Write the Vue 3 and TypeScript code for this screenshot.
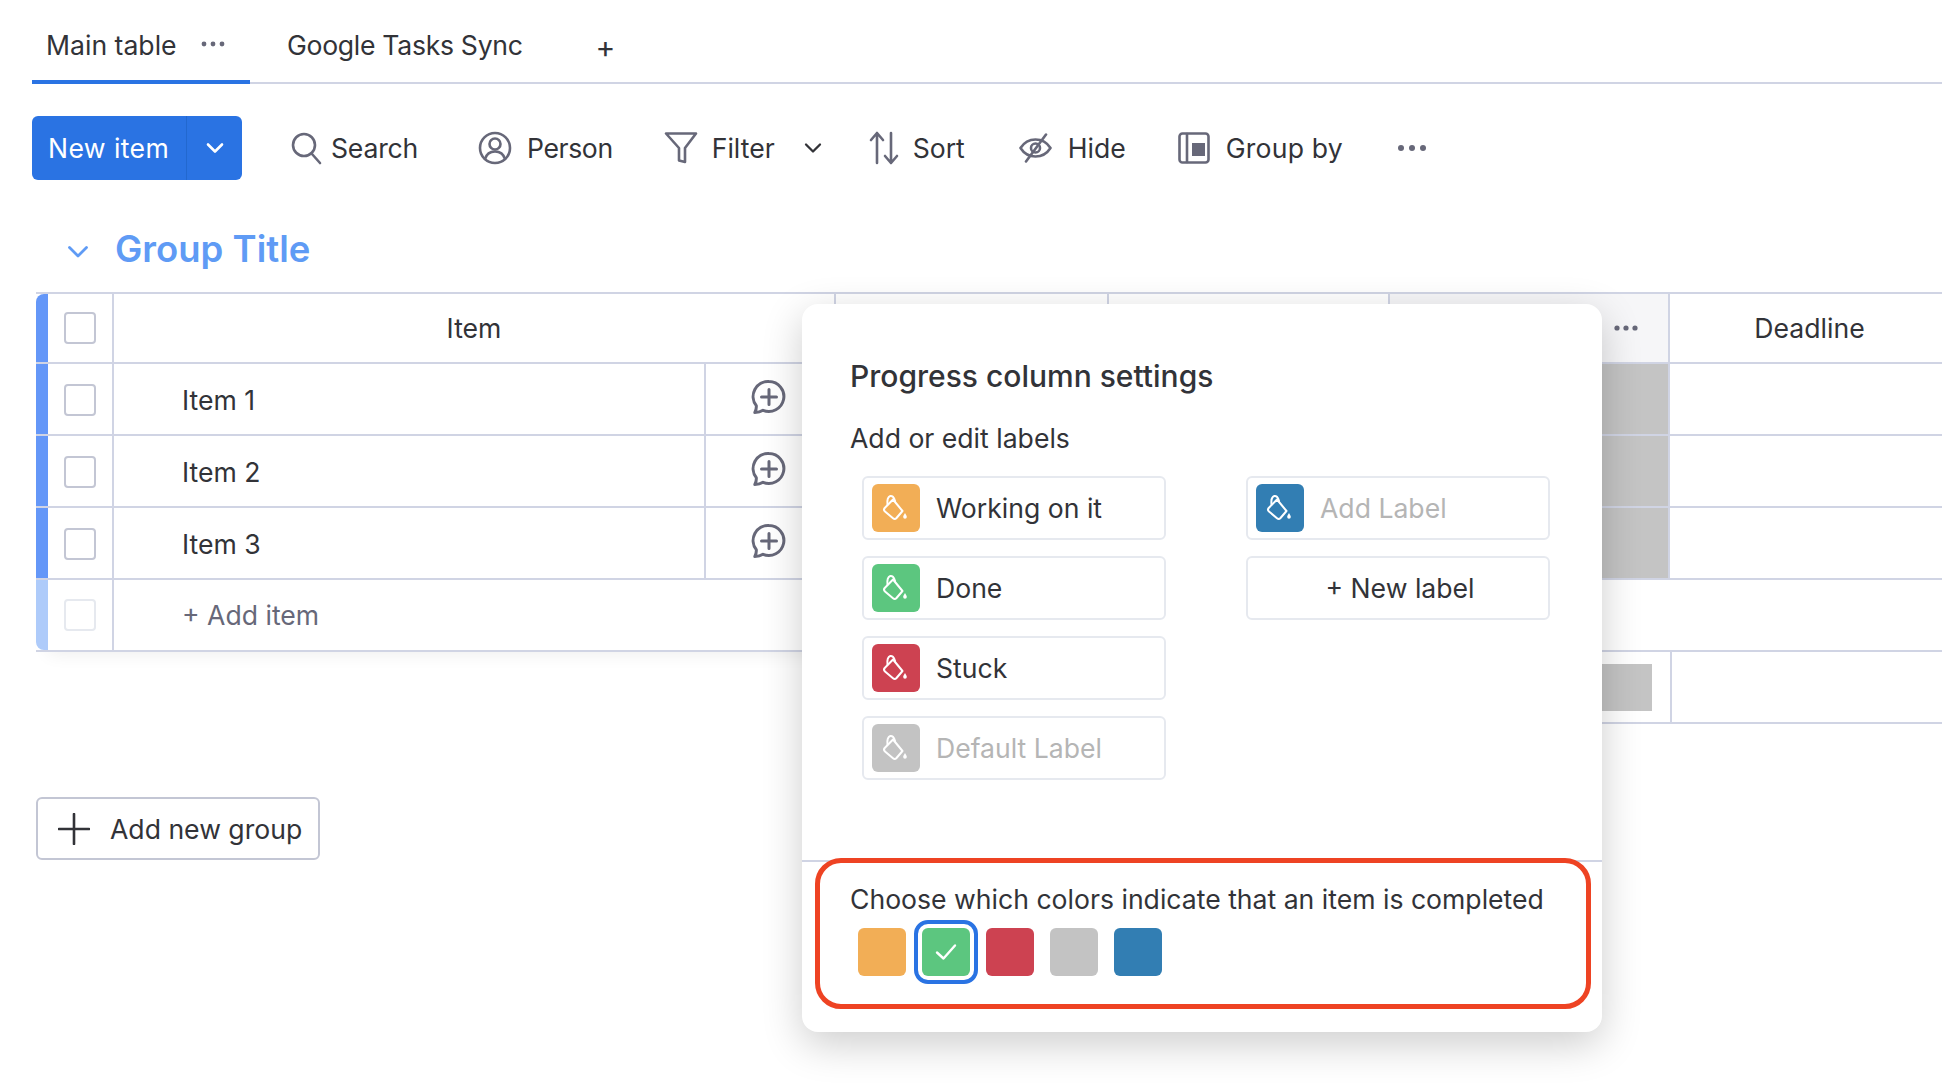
<script setup lang="ts">
const rows = ['Item 1', 'Item 2', 'Item 3']
const leftLabels = [
  { text: 'Working on it', color: '#f2ae56' },
  { text: 'Done', color: '#5cc67f' },
  { text: 'Stuck', color: '#cd4251' },
  { text: 'Default Label', color: '#c3c3c3', muted: true },
]
const swatches = [
  { color: '#f2ae56' },
  { color: '#5cc67f', picked: true },
  { color: '#cd4251' },
  { color: '#c3c3c3' },
  { color: '#327eb3' },
]
</script>

<template>
  <div class="page">
    <nav class="tabs">
      <div class="tab tab-active">
        <span>Main table</span>
        <svg class="tab-dots" width="24" height="6" viewBox="0 0 24 6"><circle cx="3" cy="3" r="2.4" /><circle cx="12" cy="3" r="2.4" /><circle cx="21" cy="3" r="2.4" /></svg>
      </div>
      <div class="tab tab-sync">Google Tasks Sync</div>
      <div class="tab-add">+</div>
    </nav>

    <div class="toolbar">
      <div class="new-item">
        <span class="new-item-text">New item</span>
        <span class="new-item-arrow">
          <svg width="20" height="12" viewBox="0 0 20 12" fill="none" stroke="#fff" stroke-width="2.6" stroke-linecap="round" stroke-linejoin="round"><path d="M3 2.5l7 7 7-7" /></svg>
        </span>
      </div>
      <div class="tool tool-search">
        <svg width="32" height="34" viewBox="0 0 32 34" class="ico"><circle cx="14" cy="14" r="11" /><path d="M22 23l8 9" /></svg>
        <span>Search</span>
      </div>
      <div class="tool tool-person">
        <svg width="34" height="34" viewBox="0 0 34 34" class="ico"><circle cx="17" cy="17" r="15" /><circle cx="17" cy="13" r="5.5" /><path d="M7 28c1.500-5 5-7.500 10-7.500s8.500 2.500 10 7.500" /></svg>
        <span>Person</span>
      </div>
      <div class="tool tool-filter">
        <svg width="34" height="34" viewBox="0 0 34 34" class="ico"><path d="M2 2.500h30L21 17v14l-6-1.500V17z" /></svg>
        <span>Filter</span>
      </div>
      <div class="tool tool-chev">
        <svg width="18" height="12" viewBox="0 0 18 12" fill="none" stroke="#323338" stroke-width="2.300" stroke-linecap="round" stroke-linejoin="round"><path d="M2 2.500l7 7 7-7" /></svg>
      </div>
      <div class="tool tool-sort">
        <svg width="30" height="34" viewBox="0 0 30 34" class="ico"><path d="M8 32V2M2 9l6-7 6 7" /><path d="M22 2v30M16 25l6 7 6-7" /></svg>
        <span>Sort</span>
      </div>
      <div class="tool tool-hide">
        <svg width="33" height="30" viewBox="0 0 33 30" class="ico"><path d="M1.500 15C5 9.500 10.500 6.500 16.500 6.500S28 9.500 31.500 15C28 20.500 22.500 23.500 16.500 23.500S5 20.500 1.500 15z" /><circle cx="16.500" cy="15" r="4.500" /><path d="M27 1.500L7 28.500" /></svg>
        <span>Hide</span>
      </div>
      <div class="tool tool-group">
        <svg width="32" height="32" viewBox="0 0 32 32" class="ico"><rect x="1.500" y="1.500" width="29" height="29" rx="3" /><path d="M9 2v28" /><rect x="14" y="11" width="13" height="13" class="ico-fill" /></svg>
        <span>Group by</span>
      </div>
      <svg class="tool-more" width="30" height="8" viewBox="0 0 30 8"><circle cx="4" cy="4" r="3" /><circle cx="15" cy="4" r="3" /><circle cx="26" cy="4" r="3" /></svg>
    </div>

    <div class="group-head">
      <svg class="group-chev" width="22" height="14" viewBox="0 0 22 14" fill="none" stroke="#5f9bf5" stroke-width="2.800" stroke-linecap="round" stroke-linejoin="round"><path d="M2.500 2.500L11 11l8.500-8.500" /></svg>
      <span class="group-title">Group Title</span>
    </div>

    <div class="board">
      <div class="row row-head">
        <div class="bar"></div>
        <div class="cell-check"><span class="check"></span></div>
        <div class="cell-item-head">Item</div>
        <div class="cell col-a"></div>
        <div class="cell col-b"></div>
        <div class="cell col-c head-more">
          <svg width="24" height="6" viewBox="0 0 24 6" fill="#676879"><circle cx="3" cy="3" r="2.600" /><circle cx="12" cy="3" r="2.600" /><circle cx="21" cy="3" r="2.600" /></svg>
        </div>
        <div class="cell col-d">Deadline</div>
      </div>

      <div v-for="name in rows" :key="name" class="row row-item">
        <div class="bar"></div>
        <div class="cell-check"><span class="check"></span></div>
        <div class="cell-name">{{ name }}</div>
        <div class="cell-talk">
          <svg width="36" height="36" viewBox="0 0 36 36" class="ico ico-talk"><path d="M18 2.500a15 15 0 1 1-6 28.800C9.500 33 6 33.500 3.800 33.500c1.200-2 1.700-4 1.500-6.800A15 15 0 0 1 18 2.500z" /><path d="M18 10.500v15M10.500 18h15" /></svg>
        </div>
        <div class="cell col-a"></div>
        <div class="cell col-b"></div>
        <div class="cell col-c cell-status"></div>
        <div class="cell col-d"></div>
      </div>

      <div class="row row-add">
        <div class="bar bar-light"></div>
        <div class="cell-check"><span class="check check-light"></span></div>
        <div class="cell-add">+ Add item</div>
      </div>

      <div class="row row-sum">
        <div class="sum-box"></div>
        <div class="cell col-d"></div>
      </div>
    </div>

    <div class="add-group">
      <svg width="32" height="32" viewBox="0 0 32 32" fill="none" stroke="#323338" stroke-width="2.600" stroke-linecap="round"><path d="M16 1v30M1 16h30" /></svg>
      <span>Add new group</span>
    </div>

    <div class="popover">
      <h2 class="pop-title">Progress column settings</h2>
      <div class="pop-sub">Add or edit labels</div>
      <div class="label-cols">
        <div class="label-col">
          <div v-for="l in leftLabels" :key="l.text" class="chip">
            <span class="chip-icon" :style="{ background: l.color }">
              <svg width="48" height="48" viewBox="0 0 48 48" class="bucket"><path d="M21 15.500L30.500 27 24.500 34a2.500 2.500 0 0 1-3.500.2L13 27.500a2.500 2.500 0 0 1-.3-3.500z" /><path d="M15.500 20.500C15 16 16 12.800 18.300 12 20 11.500 22 13 23 17" /><path class="drop" d="M33 29c1 1.700 1.800 2.800 1.800 4a1.800 1.800 0 0 1-3.600 0c0-1.200.8-2.300 1.800-4z" /></svg>
            </span>
            <span :class="{ 'chip-muted': l.muted }">{{ l.text }}</span>
          </div>
        </div>
        <div class="label-col">
          <div class="chip">
            <span class="chip-icon chip-blue">
              <svg width="48" height="48" viewBox="0 0 48 48" class="bucket"><path d="M21 15.500L30.500 27 24.500 34a2.500 2.500 0 0 1-3.500.2L13 27.500a2.500 2.500 0 0 1-.3-3.500z" /><path d="M15.500 20.500C15 16 16 12.800 18.300 12 20 11.500 22 13 23 17" /><path class="drop" d="M33 29c1 1.700 1.800 2.800 1.800 4a1.800 1.800 0 0 1-3.600 0c0-1.200.8-2.300 1.800-4z" /></svg>
            </span>
            <span class="chip-muted">Add Label</span>
          </div>
          <div class="chip chip-new">+ New label</div>
        </div>
      </div>

      <div class="pop-foot">
        <div class="foot-text">Choose which colors indicate that an item is completed</div>
        <div class="swatches">
          <span v-for="s in swatches" :key="s.color" class="swatch" :class="{ picked: s.picked }" :style="{ background: s.color }">
            <svg v-if="s.picked" width="24" height="20" viewBox="0 0 24 20" fill="none" stroke="#fff" stroke-width="2.400" stroke-linecap="round" stroke-linejoin="round"><path d="M3 10.500l6.500 6L21 3.500" /></svg>
          </span>
        </div>
      </div>
      <div class="highlight"></div>
    </div>
  </div>
</template>

<style scoped>
.page {
  position: relative;
  width: 1942px;
  height: 1092px;
  overflow: hidden;
  background: #fff;
  color: #323338;
  font-family: Inter, "Noto Sans", sans-serif;
  font-size: 26.6px;
}
.tabs {
  display: flex;
  height: 84px;
  margin-left: 32px;
  border-bottom: 2px solid #d0d4e4;
  box-sizing: border-box;
}
.tab {
  display: flex;
  align-items: center;
  height: 84px;
  box-sizing: border-box;
}
.tab-active {
  width: 218px;
  padding: 10px 0 0 14px;
  border-bottom: 4px solid #2a73e3;
}
.tab-dots {
  margin: -2px 0 0 24px;
  fill: #676879;
}
.tab-sync {
  margin-left: 37px;
  padding-top: 6px;
  letter-spacing: -0.3px;
}
.tab-add {
  margin-left: 73px;
  margin-top: 31px;
  font-size: 30px;
  line-height: 32px;
}
.toolbar {
  display: flex;
  align-items: center;
  height: 64px;
  margin: 32px 0 0 32px;
}
.new-item {
  display: flex;
  width: 210px;
  height: 64px;
  border-radius: 6px;
  background: #2a73e3;
  color: #fff;
}
.new-item-text {
  display: flex;
  align-items: center;
  width: 155px;
  padding-left: 16px;
  box-sizing: border-box;
  border-right: 1px solid #2268cf;
  letter-spacing: 0.4px;
}
.new-item-arrow {
  display: flex;
  flex: 1;
  align-items: center;
  justify-content: center;
}
.tool {
  display: flex;
  align-items: center;
  gap: 14px;
}
.tool-search {
  margin-left: 48px;
  gap: 9px;
  letter-spacing: -0.2px;
}
.tool-person {
  margin-left: 60px;
  gap: 15px;
  letter-spacing: -0.4px;
}
.tool-filter {
  margin-left: 51px;
}
.tool-chev {
  margin-left: 29px;
}
.tool-sort {
  margin-left: 47px;
}
.tool-hide {
  margin-left: 54px;
  gap: 16px;
}
.tool-group {
  margin-left: 52px;
  gap: 16px;
  letter-spacing: 0.2px;
}
.tool-more {
  margin-left: 54px;
  fill: #676879;
}
.ico {
  fill: none;
  stroke: #676879;
  stroke-width: 2.600;
  stroke-linecap: round;
  stroke-linejoin: round;
}
.ico-talk {
  stroke-width: 3;
}
.ico-fill {
  fill: #676879;
  stroke: none;
}
.group-head {
  display: flex;
  align-items: center;
  height: 60px;
  margin: 39px 0 13px 67px;
}
.group-chev {
  margin-top: 5px;
}
.group-title {
  margin-left: 26px;
  color: #5f9bf5;
  font-size: 36.500px;
  font-weight: 600;
}
.board {
  margin-left: 36px;
  width: 1918px;
  border-top: 2px solid #d0d4e4;
}
.row {
  display: flex;
  height: 72px;
  box-sizing: border-box;
  border-bottom: 2px solid #d0d4e4;
}
.row-head {
  height: 70px;
}
.row-item .check {
  margin-top: 2px;
}
.row-item .cell-name {
  padding-top: 2px;
}
.bar {
  width: 12px;
  background: #6497f8;
}
.row-head .bar {
  border-top-left-radius: 8px;
}
.bar-light {
  background: #aecbfa;
  border-bottom-left-radius: 8px;
}
.row-add {
  box-shadow: 0 14px 18px -12px rgba(0, 0, 0, 0.07);
}
.cell-check {
  display: flex;
  align-items: center;
  justify-content: center;
  width: 66px;
  box-sizing: border-box;
  border-right: 2px solid #d0d4e4;
}
.check {
  width: 32px;
  height: 32px;
  box-sizing: border-box;
  border: 2px solid #c3c6d4;
  border-radius: 4px;
}
.check-light {
  border-color: #e6e9ef;
}
.cell-item-head {
  display: flex;
  align-items: center;
  justify-content: center;
  width: 722px;
  box-sizing: border-box;
  border-right: 2px solid #d0d4e4;
}
.cell-name {
  display: flex;
  align-items: center;
  width: 592px;
  padding-left: 68px;
  box-sizing: border-box;
  border-right: 2px solid #d0d4e4;
}
.cell-talk {
  display: flex;
  align-items: center;
  width: 130px;
  padding: 0 0 4px 45px;
  box-sizing: border-box;
}
.cell-add {
  display: flex;
  align-items: center;
  padding-left: 68px;
  color: #676879;
}
.cell {
  display: flex;
  align-items: center;
  justify-content: center;
  box-sizing: border-box;
  border-right: 2px solid #d0d4e4;
}
.col-a {
  width: 273px;
}
.col-b {
  width: 281px;
}
.col-c {
  width: 280px;
}
.col-d {
  width: 284px;
  border-right: 0;
  padding-right: 5px;
}
.cell-status {
  background: #c4c4c4;
}
.head-more {
  justify-content: flex-end;
  padding-right: 30px;
  background: #f6f6f8;
}
.row-sum {
  position: relative;
  align-items: center;
  margin-left: 1000px;
  background: #fff;
}
.sum-box {
  flex: 1;
  height: 47px;
  margin-right: 18px;
  background: #c4c4c4;
}
.row-sum .col-d {
  height: 100%;
  border-left: 2px solid #d0d4e4;
}
.add-group {
  display: flex;
  align-items: center;
  gap: 20px;
  width: 284px;
  height: 63px;
  margin: 73px 0 0 36px;
  padding-left: 20px;
  box-sizing: border-box;
  border: 2px solid #c3c6d4;
  border-radius: 6px;
}
.popover {
  position: absolute;
  left: 802px;
  top: 304px;
  width: 800px;
  height: 728px;
  padding-top: 54px;
  box-sizing: border-box;
  background: #fff;
  border-radius: 16px;
  box-shadow: 0 12px 40px rgba(0, 0, 0, 0.2);
}
.pop-title {
  margin: 0 0 28px 48px;
  font-size: 30px;
  font-weight: 500;
  line-height: 36px;
}
.pop-sub {
  margin-left: 48px;
  line-height: 32px;
}
.label-cols {
  display: flex;
  gap: 80px;
  height: 304px;
  margin: 22px 0 0 60px;
}
.label-col {
  display: flex;
  flex-direction: column;
  gap: 16px;
}
.chip {
  display: flex;
  align-items: center;
  gap: 16px;
  width: 304px;
  height: 64px;
  padding-left: 8px;
  box-sizing: border-box;
  border: 2px solid #e6e9ef;
  border-radius: 6px;
}
.chip-icon {
  display: block;
  width: 48px;
  height: 48px;
  border-radius: 6px;
}
.chip-blue {
  background: #327eb3;
}
.chip-muted {
  color: #b5b5b5;
}
.chip-new {
  justify-content: center;
  padding-left: 4px;
}
.bucket {
  display: block;
  fill: none;
  stroke: #fff;
  stroke-width: 2;
  stroke-linecap: round;
  stroke-linejoin: round;
}
.bucket .drop {
  fill: #fff;
  stroke: none;
}
.pop-foot {
  margin-top: 80px;
  padding: 21px 0 0 48px;
  border-top: 2px solid #d0d4e4;
}
.foot-text {
  line-height: 32px;
}
.swatches {
  display: flex;
  gap: 16px;
  margin: 13px 0 0 8px;
}
.swatch {
  display: flex;
  align-items: center;
  justify-content: center;
  width: 48px;
  height: 48px;
  border-radius: 6px;
}
.picked {
  outline: 4px solid #2a73e3;
  outline-offset: 4px;
}
.highlight {
  position: absolute;
  left: 13px;
  top: 554px;
  width: 776px;
  height: 151px;
  box-sizing: border-box;
  border: 5px solid #ee4323;
  border-radius: 26px;
  pointer-events: none;
}
</style>

<style>
html,
body {
  margin: 0;
  background: #fff;
}
</style>
